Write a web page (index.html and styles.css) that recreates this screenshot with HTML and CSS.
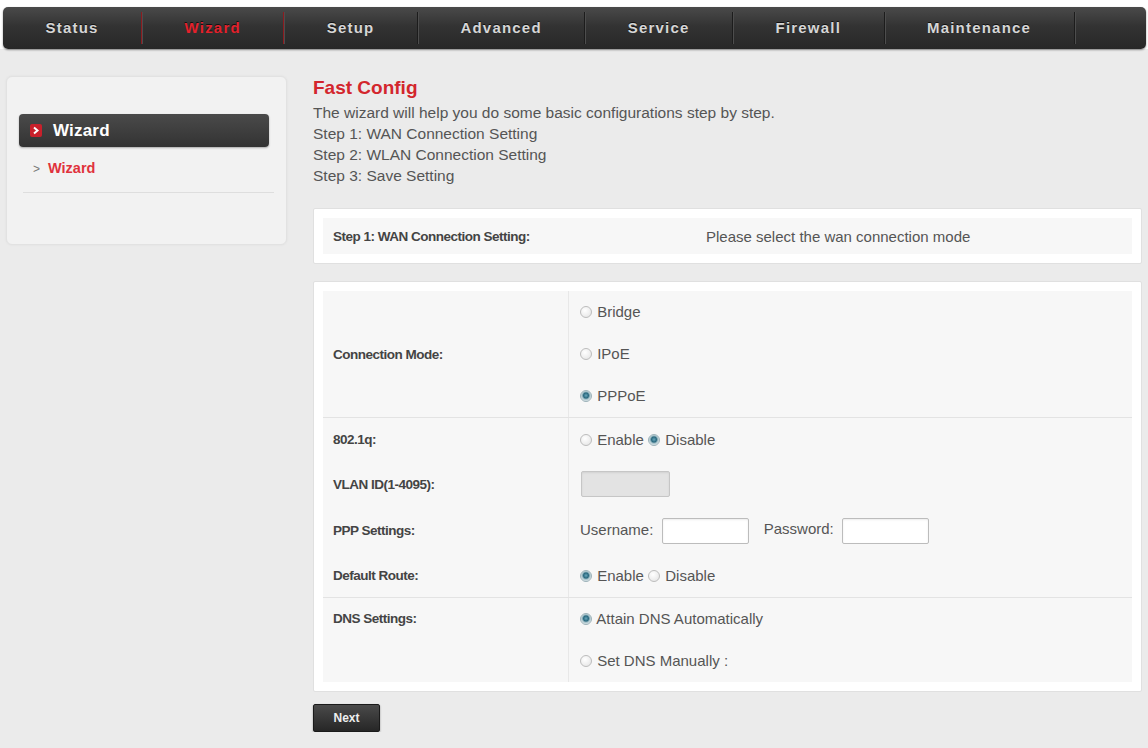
FILE: index.html
```html
<!DOCTYPE html>
<html lang="en">
<head>
    <meta charset="UTF-8">
    <meta name="viewport" content="width=device-width, initial-scale=1.0">
    <link rel="stylesheet" href="styles.css">
    <title>Fast Config</title>
</head>
<body>

    <div class="top">
        <ul class="nav">
            <li>Status</li>
            <li class="active">Wizard</li>
            <li>Setup</li>
            <li>Advanced</li>
            <li>Service</li>
            <li>Firewall</li>
            <li>Maintenance</li>
            <li class="filler"></li>
        </ul>
    </div>

    <div class="page">
        <div class="sidebar">
            <div class="menu-head">
                <span class="menu-icon">
                    <svg width="12" height="13" viewBox="0 0 12 13"><polyline points="4,3.5 7.5,6.5 4,9.5" fill="none" stroke="#fff" stroke-width="2"/></svg>
                </span>
                Wizard
            </div>
            <div class="menu-item"><span class="arrow">&gt;</span>Wizard</div>
        </div>

        <div class="main">
            <h2 class="title">Fast Config</h2>
            <div class="intro">
                <p>The wizard will help you do some basic configurations step by step.</p>
                <p>Step 1: WAN Connection Setting</p>
                <p>Step 2: WLAN Connection Setting</p>
                <p>Step 3: Save Setting</p>
            </div>

            <div class="box">
                <table class="step">
                    <tr>
                        <td class="step-label">Step 1: WAN Connection Setting:</td>
                        <td>Please select the wan connection mode</td>
                    </tr>
                </table>
            </div>

            <div class="box box-form">
                <table class="form">
                    <tr class="r-mode line">
                        <td class="label">Connection Mode:</td>
                        <td class="value">
                            <div class="opt"><input type="radio" name="mode"> Bridge</div>
                            <div class="opt"><input type="radio" name="mode"> IPoE</div>
                            <div class="opt"><input type="radio" name="mode" checked> PPPoE</div>
                        </td>
                    </tr>
                    <tr class="r-vlan-mode">
                        <td class="label">802.1q:</td>
                        <td class="value">
                            <input type="radio" name="q"> Enable <input type="radio" name="q" checked> Disable
                        </td>
                    </tr>
                    <tr class="r-vlan">
                        <td class="label">VLAN ID(1-4095):</td>
                        <td class="value"><input type="text" class="field vlan" disabled></td>
                    </tr>
                    <tr class="r-ppp">
                        <td class="label">PPP Settings:</td>
                        <td class="value">
                            Username: <input type="text" class="field"> <span class="pass">Password:</span> <input type="password" class="field">
                        </td>
                    </tr>
                    <tr class="r-route line">
                        <td class="label">Default Route:</td>
                        <td class="value">
                            <input type="radio" name="route" checked> Enable <input type="radio" name="route"> Disable
                        </td>
                    </tr>
                    <tr class="r-dns">
                        <td class="label label-top"><div class="opt">DNS Settings:</div></td>
                        <td class="value">
                            <div class="opt"><input type="radio" name="dns" checked> Attain DNS Automatically</div>
                            <div class="opt"><input type="radio" name="dns"> Set DNS Manually :</div>
                        </td>
                    </tr>
                </table>
            </div>

            <button class="btn">Next</button>
        </div>
    </div>

</body>
</html>
```

FILE: styles.css
```css
body {
    margin: 0;
    background-color: #ebebeb;
    font-family: 'Liberation Sans', Arial, sans-serif;
    color: #555;
}

.top {
    background-color: #fff;
    padding: 7px 2px 0 3px;
}

.nav {
    display: flex;
    margin: 0;
    padding: 5px 0;
    list-style: none;
    height: 32px;
    border-radius: 5px;
    background: linear-gradient(#4a4a4a, #333 45%, #272727);
    box-shadow: 0 1px 2px rgba(0, 0, 0, 0.45);
}

.nav li {
    padding: 0 42.5px;
    line-height: 32px;
    font-size: 15px;
    font-weight: bold;
    letter-spacing: 1.2px;
    color: #d6d6d6;
    text-shadow: 0 -1px 0 #111;
}

.nav li + li {
    border-left: 1px solid #1c1c1c;
    box-shadow: inset 1px 0 0 #4d4d4d;
}

.nav .active {
    color: #e3222c;
    border-left-color: #8c1b1f;
}

.nav .active + li {
    border-left-color: #8c1b1f;
}

.nav .filler {
    flex: 1;
    padding: 0;
}

.page {
    display: flex;
    gap: 26px;
    padding: 27px 0 0 6px;
}

.sidebar {
    width: 281px;
    height: 169px;
    box-sizing: border-box;
    padding: 37px 17px 0 12px;
    background-color: #f2f2f2;
    border: 1px solid #e2e2e2;
    border-radius: 6px;
    box-shadow: 0 0 3px rgba(0, 0, 0, 0.05);
}

.menu-head {
    display: flex;
    align-items: center;
    gap: 11px;
    height: 33px;
    padding-left: 11px;
    border-radius: 4px;
    background: linear-gradient(#4a4a4a, #333);
    box-shadow: 0 1px 2px rgba(0, 0, 0, 0.3);
    color: #fff;
    font-size: 17px;
    font-weight: bold;
    letter-spacing: 0.2px;
}

.menu-icon {
    display: flex;
    width: 12px;
    height: 13px;
    border-radius: 2px;
    background-color: #c9202b;
}

.menu-item {
    margin: 10px -5px 0 4px;
    padding: 0 0 12px 10px;
    line-height: 22px;
    border-bottom: 1px solid #dedede;
    color: #e0323c;
    font-size: 14.5px;
    font-weight: bold;
}

.menu-item .arrow {
    margin-right: 8px;
    color: #777;
    font-weight: normal;
    font-size: 12px;
}

.main {
    width: 829px;
}

.title {
    margin: 1px 0 3px;
    line-height: 22px;
    font-size: 19px;
    color: #d3262d;
}

.intro p {
    margin: 0;
    font-size: 15.5px;
    line-height: 21px;
}

.box {
    margin-top: 22px;
    padding: 9px;
    background-color: #fff;
    border: 1px solid #e0e0e0;
    border-radius: 2px;
}

.box-form {
    margin-top: 17px;
}

table {
    width: 100%;
    border-collapse: collapse;
    background-color: #f7f7f7;
}

td {
    padding: 0;
    font-size: 15px;
}

.step td {
    height: 36px;
}

.step .step-label {
    width: 373px;
    padding-left: 10px;
}

.step-label,
.label {
    font-size: 13.5px;
    font-weight: bold;
    letter-spacing: -0.5px;
    color: #444;
}

.label {
    width: 235px;
    padding-left: 10px;
}

.label-top {
    vertical-align: top;
}

.value {
    padding-left: 11px;
    border-left: 1px solid #e8e8e8;
}

.line td {
    border-bottom: 1px solid #e3e3e3;
}

.opt {
    height: 42px;
    line-height: 42px;
}

.r-vlan-mode td { height: 42px; }
.r-vlan td { height: 48px; }
.r-ppp td { height: 45px; }
.r-route td { height: 44px; }

input[type="radio"] {
    appearance: none;
    width: 12px;
    height: 12px;
    margin: 0 1px 0 0;
    vertical-align: -1px;
    border: 1px solid #bdbdbd;
    border-radius: 50%;
    background: radial-gradient(circle at 40% 35%, #fff, #e2e2e2);
}

input[type="radio"]:checked {
    border-color: #9fb3ba;
    background: radial-gradient(circle at 50% 45%, #6aa8bc 0, #2b6a80 2.5px, #a9c4cc 4px, #eef2f3 6px);
}

.field {
    width: 87px;
    height: 26px;
    box-sizing: border-box;
    margin: 0 4px 0 4px;
    vertical-align: middle;
    border: 1px solid #bcbcbc;
    border-radius: 2px;
    background-color: #fff;
    box-shadow: inset 0 1px 2px rgba(0, 0, 0, 0.08);
}

.field.vlan {
    width: 89px;
    margin-left: 1px;
    background-color: #e3e3e3;
    border-color: #c6c6c6;
}

.pass {
    margin-left: 7px;
}

.btn {
    margin-top: 12px;
    width: 67px;
    height: 28px;
    border: 1px solid #1a1a1a;
    border-radius: 2px;
    background: linear-gradient(#4a4a4a, #262626);
    box-shadow: 0 1px 2px rgba(0, 0, 0, 0.4);
    color: #eee;
    font-family: 'Liberation Sans', Arial, sans-serif;
    font-size: 12px;
    font-weight: bold;
    cursor: pointer;
}
```
